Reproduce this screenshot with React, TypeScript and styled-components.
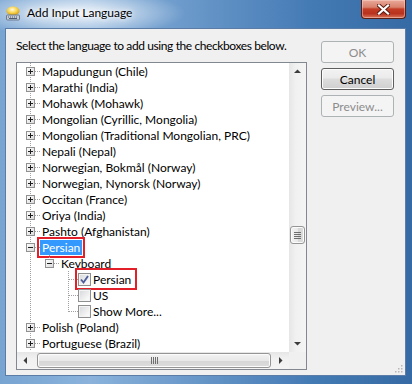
import React from "react";
import styled, { createGlobalStyle } from "styled-components";

const GlobalStyle = createGlobalStyle`
  html, body { margin: 0; padding: 0; background: #ffffff; }
  body {
    font-family: Lato, "Noto Sans", sans-serif;
    font-size: 12px;
    color: #000;
  }
`;

type Seg = "pass" | "none" | "tee" | "end";
type Marker = "plus" | "minus" | "checked" | "unchecked";

type Row = {
  label: string;
  cols: Seg[];
  marker: Marker;
  selected?: boolean;
  marked?: boolean;
};

const root = (label: string): Row => ({ label, cols: ["tee"], marker: "plus" });

const rows: Row[] = [
  root("Mapudungun (Chile)"),
  root("Marathi (India)"),
  root("Mohawk (Mohawk)"),
  root("Mongolian (Cyrillic, Mongolia)"),
  root("Mongolian (Traditional Mongolian, PRC)"),
  root("Nepali (Nepal)"),
  root("Norwegian, Bokmål (Norway)"),
  root("Norwegian, Nynorsk (Norway)"),
  root("Occitan (France)"),
  root("Oriya (India)"),
  root("Pashto (Afghanistan)"),
  { label: "Persian", cols: ["tee"], marker: "minus", selected: true, marked: true },
  { label: "Keyboard", cols: ["pass", "end"], marker: "minus" },
  { label: "Persian", cols: ["pass", "none", "tee"], marker: "checked", marked: true },
  { label: "US", cols: ["pass", "none", "tee"], marker: "unchecked" },
  { label: "Show More...", cols: ["pass", "none", "end"], marker: "unchecked" },
  root("Polish (Poland)"),
  root("Portuguese (Brazil)"),
];

const Window = styled.div`
  position: relative;
  width: 412px;
  height: 384px;
  display: flex;
  flex-direction: column;
  overflow: hidden;
  background:
    radial-gradient(ellipse 110px 24px at 75px 13px, rgba(255, 255, 255, 0.9), rgba(255, 255, 255, 0) 100%),
    linear-gradient(90deg, #78a4d2 0%, #8ab2db 22%, #6796c8 48%, #457bb5 75%, #356aa5 100%);
`;

const TitleBar = styled.div`
  height: 28px;
  display: flex;
  align-items: flex-start;
  flex: none;
`;

const AppIcon = styled.svg`
  display: block;
  margin: 5px 0 0 5px;
  flex: none;
`;

const TitleText = styled.div`
  margin: 5px 0 0 6px;
  line-height: 16px;
  font-size: 12px;
  color: #000;
  text-shadow: 0 0 8px #ffffff, 0 0 4px #ffffff;
`;

const CloseButton = styled.div`
  margin-left: auto;
  margin-right: 6px;
  width: 45px;
  height: 19px;
  box-sizing: border-box;
  display: flex;
  align-items: center;
  justify-content: center;
  border: 1px solid #5a1e14;
  border-top: none;
  border-radius: 0 0 4px 4px;
  background: linear-gradient(180deg, #e9a99a 0%, #d8826d 40%, #c33c25 50%, #b8321d 75%, #d9745a 100%);
  box-shadow: inset 0 0 0 1px rgba(255, 220, 210, 0.45);
`;

const Client = styled.div`
  position: relative;
  flex: 1;
  margin: 0 6px 8px 5px;
  border: 1px solid #5b7ca6;
  background: #f0f0f0;
  display: flex;
  gap: 14px;
  padding: 9px 11px 5px 10px;
`;

const Main = styled.div`
  width: 291px;
  display: flex;
  flex-direction: column;
`;

const Prompt = styled.div`
  height: 16px;
  line-height: 16px;
  margin-bottom: 8px;
  white-space: nowrap;
  letter-spacing: -0.4px;
`;

const TreeBox = styled.div`
  flex: 1;
  border: 1px solid #828790;
  background: #ffffff;
  display: grid;
  grid-template-columns: 1fr 17px;
  grid-template-rows: 1fr 17px;
  min-height: 0;
`;

const TreeView = styled.div`
  overflow: hidden;
  padding-left: 4px;
`;

const TreeRow = styled.div`
  height: 16px;
  display: flex;
  align-items: center;
  white-space: nowrap;
`;

const LineSvg = styled.svg`
  display: block;
  flex: none;
`;

const Label = styled.span<{ $selected?: boolean; $marked?: boolean }>`
  height: 15px;
  line-height: 15px;
  padding: 0 2px;
  background: ${(p) => (p.$selected ? "#3399ff" : "transparent")};
  color: ${(p) => (p.$selected ? "#ffffff" : "#000000")};
  outline: ${(p) => (p.$marked ? "2px solid #e3202a" : "none")};
  outline-offset: 1px;
`;

const CheckItem = styled.span<{ $marked?: boolean }>`
  display: flex;
  align-items: center;
  height: 16px;
  outline: ${(p) => (p.$marked ? "2px solid #e3202a" : "none")};
  outline-offset: 1px;
  padding-right: 1px;
`;

const CheckBox = styled.span`
  width: 13px;
  height: 13px;
  box-sizing: border-box;
  border: 1px solid #8e8f8f;
  background: linear-gradient(135deg, #d4d6d9 0%, #f4f4f4 70%, #ffffff 100%);
  box-shadow: inset 0 0 0 1px #f4f4f4;
  display: flex;
  align-items: center;
  justify-content: center;
  flex: none;
`;

const VScroll = styled.div`
  display: flex;
  flex-direction: column;
  background: linear-gradient(90deg, #e6e6e6 0%, #f1f1f1 40%, #f4f4f4 100%);
`;

const HScroll = styled.div`
  display: flex;
  background: linear-gradient(180deg, #e6e6e6 0%, #f1f1f1 40%, #f4f4f4 100%);
`;

const ArrowButton = styled.div`
  width: 17px;
  height: 17px;
  flex: none;
  display: flex;
  align-items: center;
  justify-content: center;
`;

const VTrack = styled.div`
  flex: 1;
  display: flex;
  flex-direction: column;
  align-items: center;
`;

const VThumb = styled.div`
  margin-top: 146px;
  width: 15px;
  height: 18px;
  box-sizing: border-box;
  border: 1px solid #959595;
  border-radius: 3px;
  background: linear-gradient(90deg, #f3f3f3 0%, #e8e8e8 50%, #d6d6d6 51%, #dcdcdc 100%);
  box-shadow: inset 0 0 0 1px #fbfbfb;
  display: flex;
  flex-direction: column;
  align-items: center;
  justify-content: center;
  gap: 1px;
`;

const VGrip = styled.span`
  width: 7px;
  height: 1px;
  background: #6e6e6e;
`;

const HTrack = styled.div`
  flex: 1;
  display: flex;
  align-items: center;
  padding: 0 1px 0 3px;
`;

const HThumb = styled.div`
  flex: 1;
  height: 15px;
  box-sizing: border-box;
  border: 1px solid #959595;
  border-radius: 3px;
  background: linear-gradient(180deg, #f3f3f3 0%, #e8e8e8 50%, #d6d6d6 51%, #dcdcdc 100%);
  box-shadow: inset 0 0 0 1px #fbfbfb;
  display: flex;
  align-items: center;
  justify-content: center;
  gap: 1px;
`;

const HGrip = styled.span`
  width: 1px;
  height: 7px;
  background: #6e6e6e;
`;

const Corner = styled.div`
  background: #f0f0f0;
`;

const ButtonColumn = styled.div`
  margin-top: 3px;
  width: 73px;
  display: flex;
  flex-direction: column;
  gap: 5px;
`;

const DialogButton = styled.div<{ $disabled?: boolean; $focused?: boolean }>`
  height: 22px;
  box-sizing: border-box;
  display: flex;
  align-items: center;
  justify-content: center;
  border-radius: 3px;
  border: 1px solid ${(p) => (p.$disabled ? "#adb2b5" : p.$focused ? "#5e5e5e" : "#707070")};
  background: ${(p) =>
    p.$disabled
      ? "#f4f4f4"
      : "linear-gradient(180deg, #f2f2f2 0%, #ebebeb 45%, #dddddd 50%, #cfcfcf 100%)"};
  box-shadow: inset 0 0 0 1px ${(p) => (p.$disabled ? "#f4f4f4" : "#fcfcfc")};
  color: ${(p) => (p.$disabled ? "#8d8d8d" : "#000000")};
`;

const SizeGrip = styled.svg`
  position: absolute;
  right: 2px;
  bottom: 2px;
`;

function TreeLines({ seg, marker }: { seg: Seg; marker?: Marker }) {
  const dot = { stroke: "#a0a0a0", strokeWidth: 1, strokeDasharray: "1 1" };
  const hasBox = marker === "plus" || marker === "minus";
  return (
    <LineSvg width="19" height="16">
      {(seg === "pass" || seg === "tee") && <line x1="9.5" y1="0" x2="9.5" y2="16" {...dot} />}
      {seg === "end" && <line x1="9.5" y1="0" x2="9.5" y2="9" {...dot} />}
      {(seg === "tee" || seg === "end") && <line x1="10" y1="8.5" x2="19" y2="8.5" {...dot} />}
      {hasBox && (
        <>
          <defs>
            <linearGradient id="boxfill" x1="0" y1="0" x2="1" y2="1">
              <stop offset="0" stopColor="#ffffff" />
              <stop offset="1" stopColor="#d8d8d8" />
            </linearGradient>
          </defs>
          <rect x="5.5" y="4.5" width="8" height="8" fill="url(#boxfill)" stroke="#919191" />
          <line x1="7" y1="8.5" x2="12" y2="8.5" stroke="#1d1d1d" />
          {marker === "plus" && <line x1="9.5" y1="6" x2="9.5" y2="11" stroke="#1d1d1d" />}
        </>
      )}
    </LineSvg>
  );
}

function TreeItem({ row }: { row: Row }) {
  const own = row.cols[row.cols.length - 1];
  const isCheck = row.marker === "checked" || row.marker === "unchecked";
  return (
    <TreeRow>
      {row.cols.slice(0, -1).map((s, i) => (
        <TreeLines key={i} seg={s} />
      ))}
      <TreeLines seg={own} marker={row.marker} />
      {isCheck ? (
        <CheckItem $marked={row.marked}>
          <CheckBox>
            {row.marker === "checked" && (
              <svg width="9" height="9" viewBox="0 0 9 9">
                <path d="M1 4.5 L3.5 7.5 L8 1" fill="none" stroke="#4a5c99" strokeWidth="1.8" />
              </svg>
            )}
          </CheckBox>
          <Label>{row.label}</Label>
        </CheckItem>
      ) : (
        <Label $selected={row.selected} $marked={row.marked}>
          {row.label}
        </Label>
      )}
    </TreeRow>
  );
}

function Arrow({ dir }: { dir: "up" | "down" | "left" | "right" }) {
  const pts = {
    up: "1,5 8,5 4.5,1.5",
    down: "1,2 8,2 4.5,5.5",
    left: "5,1 5,8 1.5,4.5",
    right: "2,1 2,8 5.5,4.5",
  }[dir];
  const horiz = dir === "left" || dir === "right";
  return (
    <svg width={horiz ? 7 : 9} height={horiz ? 9 : 7}>
      <polygon points={pts} fill="#3d3d3d" />
    </svg>
  );
}

export default function App() {
  return (
    <>
      <GlobalStyle />
      <Window>
        <TitleBar>
          <AppIcon width="16" height="16" viewBox="0 0 16 16">
            <defs>
              <radialGradient id="glow" cx="0.45" cy="0.35" r="0.6">
                <stop offset="0" stopColor="#fffbe0" />
                <stop offset="0.6" stopColor="#f7d24a" />
                <stop offset="1" stopColor="#d9a11c" />
              </radialGradient>
            </defs>
            <ellipse cx="8" cy="6" rx="6.5" ry="4.5" fill="url(#glow)" />
            <rect x="1.5" y="10" width="13" height="5" rx="1" fill="#c5ccd6" stroke="#6b7a8f" />
            <path d="M3 12h1M5 12h1M7 12h1M9 12h1M11 12h1M4 13.5h8" stroke="#4f5d70" />
          </AppIcon>
          <TitleText>Add Input Language</TitleText>
          <CloseButton>
            <svg width="13" height="11" viewBox="0 0 13 11">
              <path d="M2 1.5 L11 9.5 M11 1.5 L2 9.5" stroke="#5a1b10" strokeWidth="4" strokeLinecap="square" />
              <path d="M2 1.5 L11 9.5 M11 1.5 L2 9.5" stroke="#ffffff" strokeWidth="2.2" strokeLinecap="square" />
            </svg>
          </CloseButton>
        </TitleBar>
        <Client>
          <Main>
            <Prompt>Select the language to add using the checkboxes below.</Prompt>
            <TreeBox>
              <TreeView>
                {rows.map((r, i) => (
                  <TreeItem key={i} row={r} />
                ))}
              </TreeView>
              <VScroll>
                <ArrowButton>
                  <Arrow dir="up" />
                </ArrowButton>
                <VTrack>
                  <VThumb>
                    <VGrip />
                    <VGrip />
                    <VGrip />
                    <VGrip />
                  </VThumb>
                </VTrack>
                <ArrowButton>
                  <Arrow dir="down" />
                </ArrowButton>
              </VScroll>
              <HScroll>
                <ArrowButton>
                  <Arrow dir="left" />
                </ArrowButton>
                <HTrack>
                  <HThumb>
                    <HGrip />
                    <HGrip />
                    <HGrip />
                    <HGrip />
                  </HThumb>
                </HTrack>
                <ArrowButton>
                  <Arrow dir="right" />
                </ArrowButton>
              </HScroll>
              <Corner />
            </TreeBox>
          </Main>
          <ButtonColumn>
            <DialogButton $disabled>OK</DialogButton>
            <DialogButton $focused>Cancel</DialogButton>
            <DialogButton $disabled>Preview...</DialogButton>
          </ButtonColumn>
          <SizeGrip width="10" height="10" viewBox="0 0 10 10">
            {[
              [8, 2],
              [8, 5],
              [5, 5],
              [8, 8],
              [5, 8],
              [2, 8],
            ].map(([x, y], i) => (
              <rect key={i} x={x} y={y} width="1.5" height="1.5" fill="#b8b8b8" />
            ))}
          </SizeGrip>
        </Client>
      </Window>
    </>
  );
}
